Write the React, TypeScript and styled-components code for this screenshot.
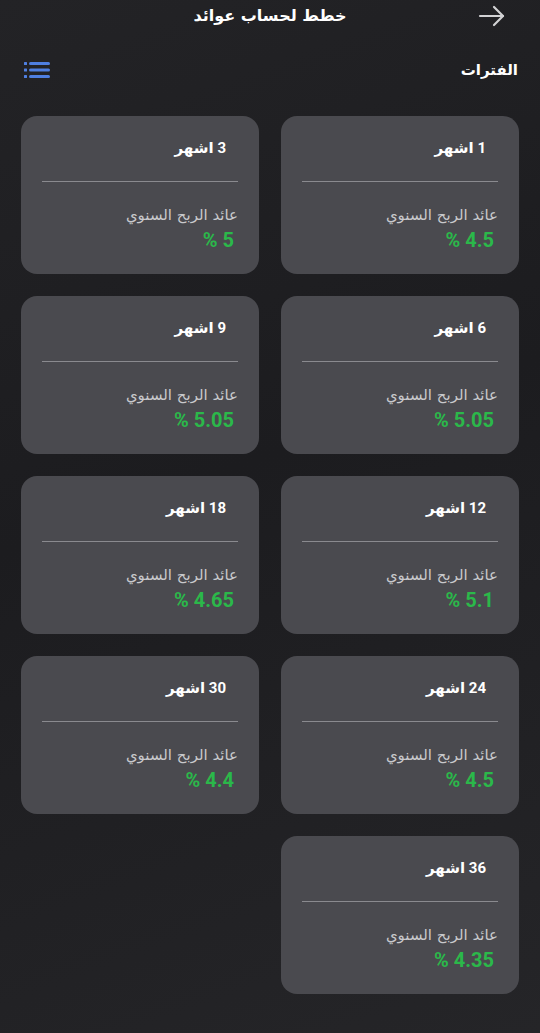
import React from 'react'
import styled, { createGlobalStyle } from 'styled-components'

type Plan = {
  months: number,
  rate: string
}

const plans: Plan[] = [
  { months: 1, rate: '4.5' },
  { months: 3, rate: '5' },
  { months: 6, rate: '5.05' },
  { months: 9, rate: '5.05' },
  { months: 12, rate: '5.1' },
  { months: 18, rate: '4.65' },
  { months: 24, rate: '4.5' },
  { months: 30, rate: '4.4' },
  { months: 36, rate: '4.35' },
]

const App = () => {
  return (
    <Page dir="rtl">
      <GlobalStyle />
      <TopBar>
        <BackButton aria-label="back">
          <svg width="28" height="22" viewBox="0 0 28 22" fill="none" stroke="#d2d2d4" strokeWidth="2.2" strokeLinecap="round" strokeLinejoin="round">
            <path d="M2 11h23" />
            <path d="M16 2l9 9-9 9" />
          </svg>
        </BackButton>
        <Title>خطط لحساب عوائد</Title>
      </TopBar>
      <SectionRow>
        <SectionTitle>الفترات</SectionTitle>
        <ListButton aria-label="list">
          <svg width="26" height="18" viewBox="0 0 26 18" fill="#4f7fe0">
            <rect x="0" y="1" width="3" height="3" rx="0.5" />
            <rect x="0" y="7.5" width="3" height="3" rx="0.5" />
            <rect x="0" y="14" width="3" height="3" rx="0.5" />
            <rect x="5" y="1" width="21" height="3" rx="1.5" />
            <rect x="5" y="7.5" width="21" height="3" rx="1.5" />
            <rect x="5" y="14" width="21" height="3" rx="1.5" />
          </svg>
        </ListButton>
      </SectionRow>
      <Grid>
        {plans.map((p) => (
          <Card key={p.months}>
            <CardTitle>{p.months} اشهر</CardTitle>
            <Divider />
            <Label>عائد الربح السنوي</Label>
            <Rate>{p.rate} %</Rate>
          </Card>
        ))}
      </Grid>
    </Page>
  )
}

const GlobalStyle = createGlobalStyle`
  html, body {
    margin: 0;
    padding: 0;
    background: #1f1f22;
  }
  body {
    font-family: Roboto, "DejaVu Sans", sans-serif;
  }
`

const Page = styled.div`
  width: 540px;
  min-height: 1033px;
  box-sizing: border-box;
  background: linear-gradient(160deg, #232326 0%, #1c1c1f 45%, #202023 70%, #252528 100%);
  color: #fff;
  padding: 0 21px 30px 21px;
`

const TopBar = styled.div`
  position: relative;
  height: 34px;
  display: flex;
  align-items: center;
  justify-content: center;
`

const BackButton = styled.div`
  position: absolute;
  right: 13px;
  top: 5px;
  display: flex;
`

const Title = styled.div`
  font-family: "DejaVu Sans", sans-serif;
  font-weight: bold;
  font-size: 16px;
  margin-top: -4px;
`

const SectionRow = styled.div`
  height: 72px;
  display: flex;
  align-items: center;
  justify-content: space-between;
  padding-bottom: 4px;
`

const SectionTitle = styled.div`
  font-family: "DejaVu Sans", sans-serif;
  font-weight: bold;
  font-size: 15px;
  margin-right: 1px;
`

const ListButton = styled.div`
  display: flex;
  margin-left: 3px;
`

const Grid = styled.div`
  display: grid;
  grid-template-columns: 238px 238px;
  column-gap: 22px;
  row-gap: 22px;
  margin-top: 6px;
`

const Card = styled.div`
  height: 158px;
  box-sizing: border-box;
  background: #4a4a4f;
  border-radius: 16px;
  padding: 22px 21px 0 21px;
  display: flex;
  flex-direction: column;
`

const CardTitle = styled.div`
  font-weight: bold;
  font-size: 15px;
  line-height: 20px;
  padding-right: 12px;
  color: #fff;
`

const Divider = styled.div`
  height: 1px;
  background: #8a8a8f;
  margin-top: 23px;
`

const Label = styled.div`
  font-family: "DejaVu Sans", sans-serif;
  font-size: 15px;
  line-height: 20px;
  color: #c9c9cc;
  margin-top: 23px;
`

const Rate = styled.div`
  font-weight: bold;
  font-size: 20px;
  line-height: 24px;
  color: #2bb84a;
  padding-right: 4px;
  margin-top: 3px;
`

export default App
